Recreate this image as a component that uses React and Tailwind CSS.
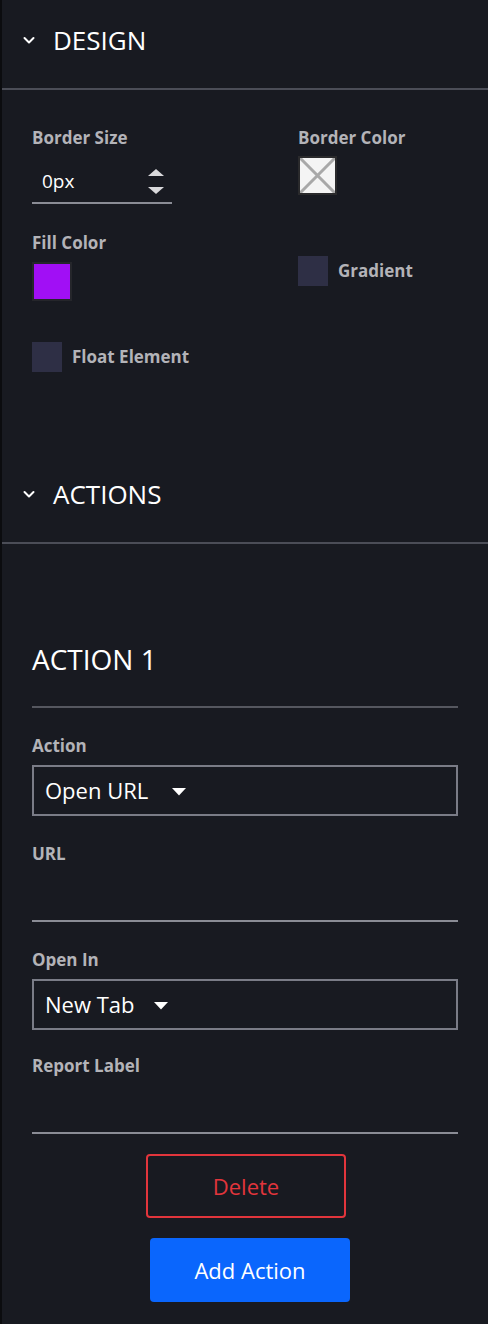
import React from 'react';

const font = { fontFamily: '"Open Sans", "Noto Sans", sans-serif' };

const Chevron = () => (
  <svg width="14" height="10" viewBox="0 0 14 10" fill="none">
    <path d="M2.5 3 L7 7.5 L11.5 3" stroke="#ffffff" strokeWidth="2" strokeLinecap="round" strokeLinejoin="round" />
  </svg>
);

const Caret = () => (
  <svg width="14" height="8" viewBox="0 0 14 8">
    <path d="M0 0 H14 L7 7.5 Z" fill="#ffffff" />
  </svg>
);

const SectionHeader = ({ title }) => (
  <div>
    <div className="flex items-center h-[88px] pl-[20px] pb-[9px]">
      <Chevron />
      <span className="ml-[17px] text-[26px] leading-none text-white">{title}</span>
    </div>
    <div className="h-[2px] bg-[#4b4d57]" />
  </div>
);

const Label = ({ children, className = '' }) => (
  <div className={`text-[17px] leading-[22px] font-bold text-[#b3b3b8] ${className}`}>{children}</div>
);

const Checkbox = ({ label }) => (
  <div className="flex items-center">
    <div className="w-[30px] h-[30px] bg-[#2e2f45]" />
    <span className="ml-[10px] text-[17px] font-bold text-[#b3b3b8]">{label}</span>
  </div>
);

const SelectBox = ({ value, gap = 'ml-[20px]' }) => (
  <div className="mt-[8px] h-[51px] border-2 border-[#7a7c87] flex items-center pl-[11px]">
    <span className="text-[22px] text-white">{value}</span>
    <span className={`${gap} mt-[2px]`}><Caret /></span>
  </div>
);

const App = () => {
  return (
    <div style={font} className="w-[488px] h-[1324px] bg-[#181a21] border-l-2 border-[#0b0c0f] overflow-hidden">
      <SectionHeader title="DESIGN" />

      <div className="px-[30px] pt-[37px] h-[364px]">
        <div className="grid grid-cols-[266px_1fr]">
          <div>
            <Label>Border Size</Label>
            <div className="mt-[11px] w-[140px] h-[44px] border-b-2 border-[#8a8c95] flex items-center justify-between pl-[10px] pr-[8px]">
              <span className="text-[19px] text-white">0px</span>
              <div className="flex flex-col gap-[11px]">
                <svg width="16" height="7" viewBox="0 0 16 7"><path d="M0 7 L8 0 L16 7 Z" fill="#d9d9dc" /></svg>
                <svg width="16" height="7" viewBox="0 0 16 7"><path d="M0 0 L16 0 L8 7 Z" fill="#d9d9dc" /></svg>
              </div>
            </div>
          </div>
          <div>
            <Label>Border Color</Label>
            <div className="mt-[7px] w-[39px] h-[39px] border-2 border-[#2a2a2c] bg-white">
              <svg width="35" height="35" viewBox="0 0 35 35">
                <rect width="35" height="35" fill="#f4f4f4" />
                <path d="M0 0 L35 35 M35 0 L0 35" stroke="#a8a8a8" strokeWidth="3" />
              </svg>
            </div>
          </div>
        </div>

        <div className="grid grid-cols-[266px_1fr] mt-[28px]">
          <div>
            <Label>Fill Color</Label>
            <div className="mt-[8px] w-[40px] h-[39px] border-2 border-[#25262b] bg-[#a10ff5]" />
          </div>
          <div className="pt-[24px]">
            <Checkbox label="Gradient" />
          </div>
        </div>

        <div className="mt-[41px]">
          <Checkbox label="Float Element" />
        </div>
      </div>

      <SectionHeader title="ACTIONS" />

      <div className="px-[30px] pt-[96px]">
        <div className="text-[28px] leading-[38px] text-white">ACTION 1</div>
        <div className="mt-[28px] h-[2px] bg-[#55575f]" />

        <Label className="mt-[27px]">Action</Label>
        <SelectBox value="Open URL" gap="ml-[24px]" />

        <Label className="mt-[27px]">URL</Label>
        <div className="mt-[4px] h-[53px] border-b-2 border-[#8a8c95]" />

        <Label className="mt-[27px]">Open In</Label>
        <SelectBox value="New Tab" />

        <Label className="mt-[25px]">Report Label</Label>
        <div className="mt-[5px] h-[52px] border-b-2 border-[#8a8c95]" />

        <div className="flex flex-col items-start">
          <button className="mt-[20px] ml-[114px] w-[200px] h-[64px] rounded-[4px] border-2 border-[#e2353c] text-[#e2353c] text-[22px]">
            Delete
          </button>
          <button className="mt-[20px] ml-[118px] w-[200px] h-[64px] rounded-[4px] bg-[#0a66fd] text-white text-[22px]">
            Add Action
          </button>
        </div>
      </div>
    </div>
  );
};

export default App;
